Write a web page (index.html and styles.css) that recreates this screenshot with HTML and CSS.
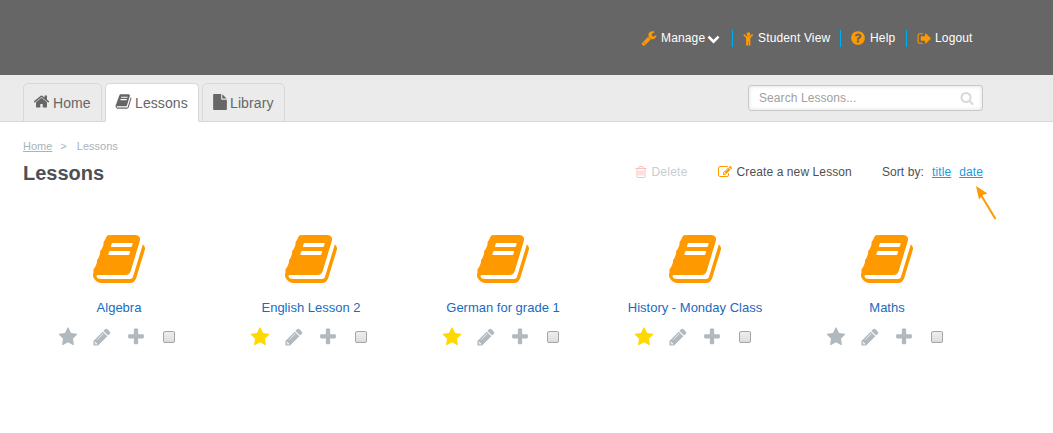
FILE: index.html
```html
<!DOCTYPE html>
<html lang="en">
<head>
<meta charset="utf-8">
<title>Lessons</title>
<link rel="stylesheet" href="styles.css">
</head>
<body>
<svg class="sprite" aria-hidden="true">
<symbol id="star" viewBox="0 0 1792 1792"><path d="M1728 647q0 22-26 48l-363 354 86 500q1 7 1 20 0 21-10.5 35.5t-30.5 14.5q-19 0-40-12l-449-236-449 236q-22 12-40 12-21 0-31.500-14.500t-10.500-35.500q0-6 2-20l86-500-364-354q-25-27-25-48 0-37 56-46l502-73 225-455q19-41 49-41t49 41l225 455 502 73q56 9 56 46z"/></symbol>
<symbol id="pencil" viewBox="0 0 1792 1792"><path d="M400 1560l60-60-170-170-60 60v70h100v100h70zm614-952q0-22-22-22-10 0-17 7l-542 542q-7 7-7 17 0 22 22 22 10 0 17-7l542-542q7-7 7-17zm-54-192l416 416-832 832h-416v-416zm683 96q0 53-37 90l-166 166-416-416 166-165q36-38 90-38 53 0 91 38l235 234q37 39 37 91z"/></symbol>
<symbol id="plus" viewBox="0 0 1792 1792"><path d="M1600 736v192q0 40-28 68t-68 28h-416v416q0 40-28 68t-68 28h-192q-40 0-68-28t-28-68v-416h-416q-40 0-68-28t-28-68v-192q0-40 28-68t68-28h416v-416q0-40 28-68t68-28h192q40 0 68 28t28 68v416h416q40 0 68 28t28 68z"/></symbol>
<symbol id="home" viewBox="0 0 1792 1792"><path d="M1472 992v480q0 26-19 45t-45 19h-384v-384h-256v384h-384q-26 0-45-19t-19-45v-480q0-1 .5-3t.5-3l575-474 575 474q1 2 1 6zm223-69l-62 74q-8 9-21 11h-3q-13 0-21-7l-692-577-692 577q-12 8-24 7-13-2-21-11l-62-74q-8-10-7-23.500t11-21.500l719-599q32-26 76-26t76 26l244 204v-195q0-14 9-23t23-9h192q14 0 23 9t9 23v408l219 182q10 8 11 21.500t-7 23.500z"/></symbol>
<symbol id="book" viewBox="0 0 1792 1792"><path d="M1703 478q40 57 18 129l-275 906q-19 64-76.500 107.500t-122.500 43.500h-923q-77 0-148.500-53.500t-99.500-131.500q-24-67-2-127 0-4 3-27t4-37q1-8-3-21.500t-3-19.500q2-11 8-21t16.500-23.500 16.500-23.500q23-38 45-91.500t30-91.500q3-10 .5-30t-.5-28q3-11 17-28t17-23q21-36 42-92t25-90q1-9-2.500-32t.5-28q4-13 22-30.500t22-22.500q19-26 42.500-84.500t27.500-96.500q1-8-3-25.500t-2-26.500q2-8 9-18t18-23 17-21q8-12 16.500-30.500t15-35 16-36 19.500-32 26.500-23.500 36-11.500 47.500 5.500l-1 3q38-9 51-9h761q74 0 114 56t18 130l-274 906q-36 119-71.500 153.500t-128.500 34.500h-869q-27 0-38 15-11 16-1 43 24 70 144 70h923q29 0 56-15.500t35-41.500l300-987q7-22 5-57 38 15 59 43zm-1064 2q-4 13 2 22.500t20 9.500h608q13 0 25.500-9.500t16.500-22.500l21-64q4-13-2-22.500t-20-9.500h-608q-13 0-25.500 9.500t-16.500 22.500zm-83 256q-4 13 2 22.500t20 9.500h608q13 0 25.500-9.500t16.500-22.500l21-64q4-13-2-22.500t-20-9.500h-608q-13 0-25.500 9.500t-16.500 22.500z"/></symbol>
<symbol id="file" viewBox="0 0 1792 1792"><path d="M1152 512v-472q22 14 36 28l408 408q14 14 28 36h-472zm-128 32q0 40 28 68t68 28h544v1056q0 40-28 68t-68 28h-1344q-40 0-68-28t-28-68v-1600q0-40 28-68t68-28h800v544z"/></symbol>
<symbol id="search" viewBox="0 0 1792 1792"><path d="M1216 832q0-185-131.500-316.500t-316.500-131.500-316.500 131.500-131.500 316.500 131.500 316.500 316.500 131.500 316.500-131.500 131.500-316.500zm512 832q0 52-38 90t-90 38q-54 0-90-38l-343-342q-179 124-399 124-143 0-273.500-55.500t-225-150-150-225-55.500-273.500 55.500-273.500 150-225 225-150 273.500-55.500 273.500 55.500 225 150 150 225 55.500 273.500q0 220-124 399l343 343q37 37 37 90z"/></symbol>
<symbol id="wrench" viewBox="0 0 1792 1792"><path d="M448 1472q0-26-19-45t-45-19-45 19-19 45 19 45 45 19 45-19 19-45zm644-420l-682 682q-37 37-90 37-52 0-91-37l-106-108q-38-36-38-90 0-53 38-91l681-681q39 98 114.500 173.500t173.500 114.500zm634-435q0 39-23 106-47 134-164.500 217.500t-258.500 83.500q-185 0-316.500-131.500t-131.500-316.500 131.500-316.500 316.500-131.500q58 0 121.500 16.500t107.500 46.500q16 11 16 28t-16 28l-293 169v224l193 107q5-3 79-48.500t135.500-81 70.500-35.500q15 0 23.500 10t8.500 25z"/></symbol>
<symbol id="question" viewBox="0 0 1792 1792"><path d="M1024 1376v-192q0-14-9-23t-23-9h-192q-14 0-23 9t-9 23v192q0 14 9 23t23 9h192q14 0 23-9t9-23zm256-672q0-88-55.500-163t-138.500-116-170-41q-243 0-371 213-15 24 8 42l132 100q7 6 19 6 16 0 25-12 53-68 86-92 34-24 86-24 48 0 85.500 26t37.500 59q0 38-20 61t-68 45q-63 28-115.500 86.500t-52.500 125.500v36q0 14 9 23t23 9h192q14 0 23-9t9-23q0-19 21.500-49.500t54.500-49.500q32-18 49-28.500t46-35 44.500-48 28-60.500 12.500-81zm384 192q0 209-103 385.500t-279.500 279.500-385.500 103-385.500-103-279.500-279.500-103-385.500 103-385.500 279.500-279.500 385.500-103 385.500 103 279.500 279.500 103 385.500z"/></symbol>
<symbol id="signout" viewBox="0 0 1792 1792"><path d="M704 1440q0 4 1 20t.5 26.500-3 23.500-10 19.500-20.500 6.500h-320q-119 0-203.500-84.500t-84.500-203.500v-704q0-119 84.500-203.500t203.500-84.500h320q13 0 22.500 9.500t9.500 22.500q0 4 1 20t.5 26.500-3 23.500-10 19.500-20.500 6.500h-320q-66 0-113 47t-47 113v704q0 66 47 113t113 47h312l11.500 1 11.500 3 8 5.500 7 9 2 13.500zm928-544q0 26-19 45l-544 544q-19 19-45 19t-45-19-19-45v-288h-448q-26 0-45-19t-19-45v-384q0-26 19-45t45-19h448v-288q0-26 19-45t45-19 45 19l544 544q19 19 19 45z"/></symbol>
<symbol id="child" viewBox="0 0 1792 1792"><path d="M1412 540l-292 292v824q0 46-33 79t-79 33-79-33-33-79v-384h-64v384q0 46-33 79t-79 33-79-33-33-79v-824l-292-292q-28-28-28-68t28-68q29-28 68.500-28t67.500 28l228 228h368l228-228q28-28 68-28t68 28q28 29 28 68.500t-28 67.500zm-292-156q0 93-65.500 158.500t-158.500 65.500-158.500-65.500-65.500-158.500 65.500-158.500 158.500-65.500 158.500 65.500 65.500 158.500z"/></symbol>
<symbol id="chevron" viewBox="0 0 1792 1792"><path d="M1683 808l-742 741q-19 19-45 19t-45-19l-742-741q-19-19-19-45.500t19-45.500l166-165q19-19 45-19t45 19l531 531 531-531q19-19 45-19t45 19l166 165q19 19 19 45.500t-19 45.500z"/></symbol>
<symbol id="trash" viewBox="0 0 1792 1792"><path d="M704 736v576q0 14-9 23t-23 9h-64q-14 0-23-9t-9-23v-576q0-14 9-23t23-9h64q14 0 23 9t9 23zm256 0v576q0 14-9 23t-23 9h-64q-14 0-23-9t-9-23v-576q0-14 9-23t23-9h64q14 0 23 9t9 23zm256 0v576q0 14-9 23t-23 9h-64q-14 0-23-9t-9-23v-576q0-14 9-23t23-9h64q14 0 23 9t9 23zm128 724v-948h-896v948q0 22 7 40.500t14.500 27 10.500 8.500h832q3 0 10.500-8.500t14.500-27 7-40.500zm-672-1076h448l-48-117q-7-9-17-11h-317q-10 2-17 11zm928 32v64q0 14-9 23t-23 9h-96v948q0 83-47 143.500t-113 60.500h-832q-66 0-113-58.500t-47-141.500v-952h-96q-14 0-23-9t-9-23v-64q0-14 9-23t23-9h309l70-167q15-37 54-63t79-26h320q40 0 79 26t54 63l70 167h309q14 0 23 9t9 23z"/></symbol>
<symbol id="edit" viewBox="0 0 1792 1792"><path d="M888 1184l116-116-152-152-116 116v56h96v96h56zm440-720q-16-16-33 1l-350 350q-17 17-1 33t33-1l350-350q17-17 1-33zm80 594v190q0 119-84.500 203.500t-203.500 84.500h-832q-119 0-203.500-84.500t-84.500-203.500v-832q0-119 84.500-203.500t203.500-84.500h832q63 0 117 25 15 7 18 23 3 17-9 29l-49 49q-14 14-32 8-23-6-45-6h-832q-66 0-113 47t-47 113v832q0 66 47 113t113 47h832q66 0 113-47t47-113v-126q0-13 9-22l64-64q15-15 35-7t20 29zm-96-738l288 288-672 672h-288v-288zm444 132l-92 92-288-288 92-92q28-28 68-28t68 28l152 152q28 28 28 68t-28 68z"/></symbol>
</svg>
<header class="topbar">
<ul class="usernav">
<li class="manage"><svg class="icon"><use href="#wrench"/></svg><span>Manage</span><svg class="icon caret"><use href="#chevron"/></svg></li>
<li class="student"><svg class="icon"><use href="#child"/></svg><span>Student View</span></li>
<li class="help"><svg class="icon"><use href="#question"/></svg><span>Help</span></li>
<li class="logout"><svg class="icon"><use href="#signout"/></svg><span>Logout</span></li>
</ul>
</header>
<div class="tabbar">
<nav class="tabs">
<a class="tab tab-home"><svg class="icon"><use href="#home"/></svg><span>Home</span></a>
<a class="tab tab-lessons active"><svg class="icon"><use href="#book"/></svg><span>Lessons</span></a>
<a class="tab tab-library"><svg class="icon"><use href="#file"/></svg><span>Library</span></a>
</nav>
<div class="search"><span>Search Lessons...</span><svg class="icon"><use href="#search"/></svg></div>
</div>
<main class="content">
<div class="crumbs"><a>Home</a><span class="sep">&gt;</span><span>Lessons</span></div>
<div class="heading">
<h1>Lessons</h1>
<div class="tools">
<span class="tool delete"><svg class="icon"><use href="#trash"/></svg><span>Delete</span></span>
<span class="tool create"><svg class="icon"><use href="#edit"/></svg><span>Create a new Lesson</span></span>
<span class="sort"><span>Sort by:</span><a>title</a><a class="date">date<svg class="arrow" viewBox="0 0 24 36"><path class="shaft" d="M6 9L20.500 33"/><path class="head" d="M1 0L12.500 7.500L7.500 9L4 13.500z"/></svg></a></span>
</div>
</div>
<div class="grid">
<article class="lesson"><svg class="cover"><use href="#book"/></svg><a class="name">Algebra</a><div class="actions"><svg class="icon"><use href="#star"/></svg><svg class="icon"><use href="#pencil"/></svg><svg class="icon"><use href="#plus"/></svg><input type="checkbox"></div></article>
<article class="lesson starred"><svg class="cover"><use href="#book"/></svg><a class="name">English Lesson 2</a><div class="actions"><svg class="icon"><use href="#star"/></svg><svg class="icon"><use href="#pencil"/></svg><svg class="icon"><use href="#plus"/></svg><input type="checkbox"></div></article>
<article class="lesson starred"><svg class="cover"><use href="#book"/></svg><a class="name">German for grade 1</a><div class="actions"><svg class="icon"><use href="#star"/></svg><svg class="icon"><use href="#pencil"/></svg><svg class="icon"><use href="#plus"/></svg><input type="checkbox"></div></article>
<article class="lesson starred"><svg class="cover"><use href="#book"/></svg><a class="name">History - Monday Class</a><div class="actions"><svg class="icon"><use href="#star"/></svg><svg class="icon"><use href="#pencil"/></svg><svg class="icon"><use href="#plus"/></svg><input type="checkbox"></div></article>
<article class="lesson"><svg class="cover"><use href="#book"/></svg><a class="name">Maths</a><div class="actions"><svg class="icon"><use href="#star"/></svg><svg class="icon"><use href="#pencil"/></svg><svg class="icon"><use href="#plus"/></svg><input type="checkbox"></div></article>
</div>
</main>
</body>
</html>
```
FILE: styles.css
```css
* { box-sizing: border-box; }
body { margin: 0; background: #fff; font: 12px/16px "Liberation Sans", Arial, sans-serif; color: #4d5054; overflow: hidden; }
.sprite { display: none; }
.icon { width: 16px; height: 16px; fill: currentColor; flex: none; }

.topbar { height: 75px; background: #666; padding: 30px 0 0 641px; }
.usernav { display: flex; margin: 0; padding: 0; list-style: none; color: #fff; letter-spacing: .15px; }
.usernav li { display: flex; align-items: center; height: 17px; padding-bottom: 1px; white-space: nowrap; }
.usernav li + li { border-left: 1px solid #00aeef; }
.usernav .icon { fill: #ff9900; }
.usernav .caret { width: 13px; height: 13px; fill: #fff; margin-left: 2px; }
.manage { width: 91px; }
.manage span { margin-left: 4px; }
.student { width: 108px; padding-left: 8px; }
.student .icon { width: 15px; height: 15px; }
.student span { margin-left: 2px; }
.help { width: 66px; padding-left: 9px; }
.help span { margin-left: 4px; }
.logout { padding-left: 10px; }
.logout .icon { width: 15px; height: 15px; }
.logout span { margin-left: 3px; }

.tabbar { height: 47px; background: #ebebeb; border-bottom: 1px solid #d8d8d8; padding: 8px 70px 0 23px; display: flex; justify-content: space-between; }
.tabs { display: flex; gap: 3px; }
.tab { display: flex; align-items: center; height: 39px; padding-left: 9px; border: 1px solid #d8d8d8; border-radius: 5px 5px 0 0; font-size: 14px; letter-spacing: .1px; color: #666; }
.tab .icon { width: 17px; height: 17px; margin-bottom: 2px; }
.tab span { margin-left: 3px; }
.tab.active { background: #fff; border-bottom-color: #fff; }
.tab-home { width: 79px; }
.tab-lessons { width: 94px; }
.tab-library { width: 83px; }
.tab-library .icon { width: 16px; height: 16px; }
.tab-library span { margin-left: 2px; }
.search { display: flex; align-items: center; justify-content: space-between; width: 235px; height: 26px; margin-top: 2px; padding: 0 8px 0 10px; background: #fff; border: 1px solid #c8c8c8; border-radius: 3px; box-shadow: inset 0 0 4px #ddd; color: #a0a0a0; letter-spacing: .08px; }
.search .icon { width: 14px; height: 14px; fill: #d9d9d9; }

.content { width: 960px; margin-left: 23px; padding-top: 16px; }
.crumbs { display: flex; height: 16px; font-size: 11px; color: #a9b3ba; }
.crumbs a { text-decoration: underline; }
.crumbs .sep { margin: 0 10px 0 8px; }
.heading { display: flex; justify-content: space-between; height: 36px; padding-top: 7px; }
h1 { margin: 0; font-size: 20px; line-height: 24px; color: #4d5054; }
.tools { display: flex; height: 22px; align-items: center; letter-spacing: .1px; }
.tool { display: flex; align-items: center; }
.tool .icon { width: 14px; height: 14px; }
.delete { color: #ccc; letter-spacing: .25px; margin-right: 30px; }
.delete .icon { fill: #f9c0c0; }
.delete span { margin-left: 3px; }
.create { margin-right: 30px; }
.create .icon { fill: #ff9900; }
.create span { margin-left: 5px; }
.sort { display: flex; gap: 8px; }
.sort a { color: #1b9be0; text-decoration: underline; }
.date { position: relative; }
.arrow { position: absolute; left: 16px; top: 22px; width: 24px; height: 36px; }
.shaft { stroke: #ff9900; stroke-width: 2; }
.head { fill: #ff9900; }

.grid { display: grid; grid-template-columns: repeat(5, 192px); padding-top: 41px; }
.lesson { display: flex; flex-direction: column; align-items: center; color: #b0b9be; }
.cover { width: 56px; height: 56px; fill: #ff9900; }
.name { margin-top: 13px; font-size: 13px; color: #1a6bbf; }
.actions { display: flex; align-items: center; gap: 14px; align-self: flex-start; margin: 10px 0 0 35px; }
.actions .icon { width: 20px; height: 20px; margin-top: 1px; }
.starred .actions .icon:first-child { fill: #ffd800; }
input { appearance: none; width: 12px; height: 12px; margin: 0 0 0 3px; border: 1px solid #a6a6a6; border-radius: 2px; background: linear-gradient(#eee, #dcdcdc); }
```
